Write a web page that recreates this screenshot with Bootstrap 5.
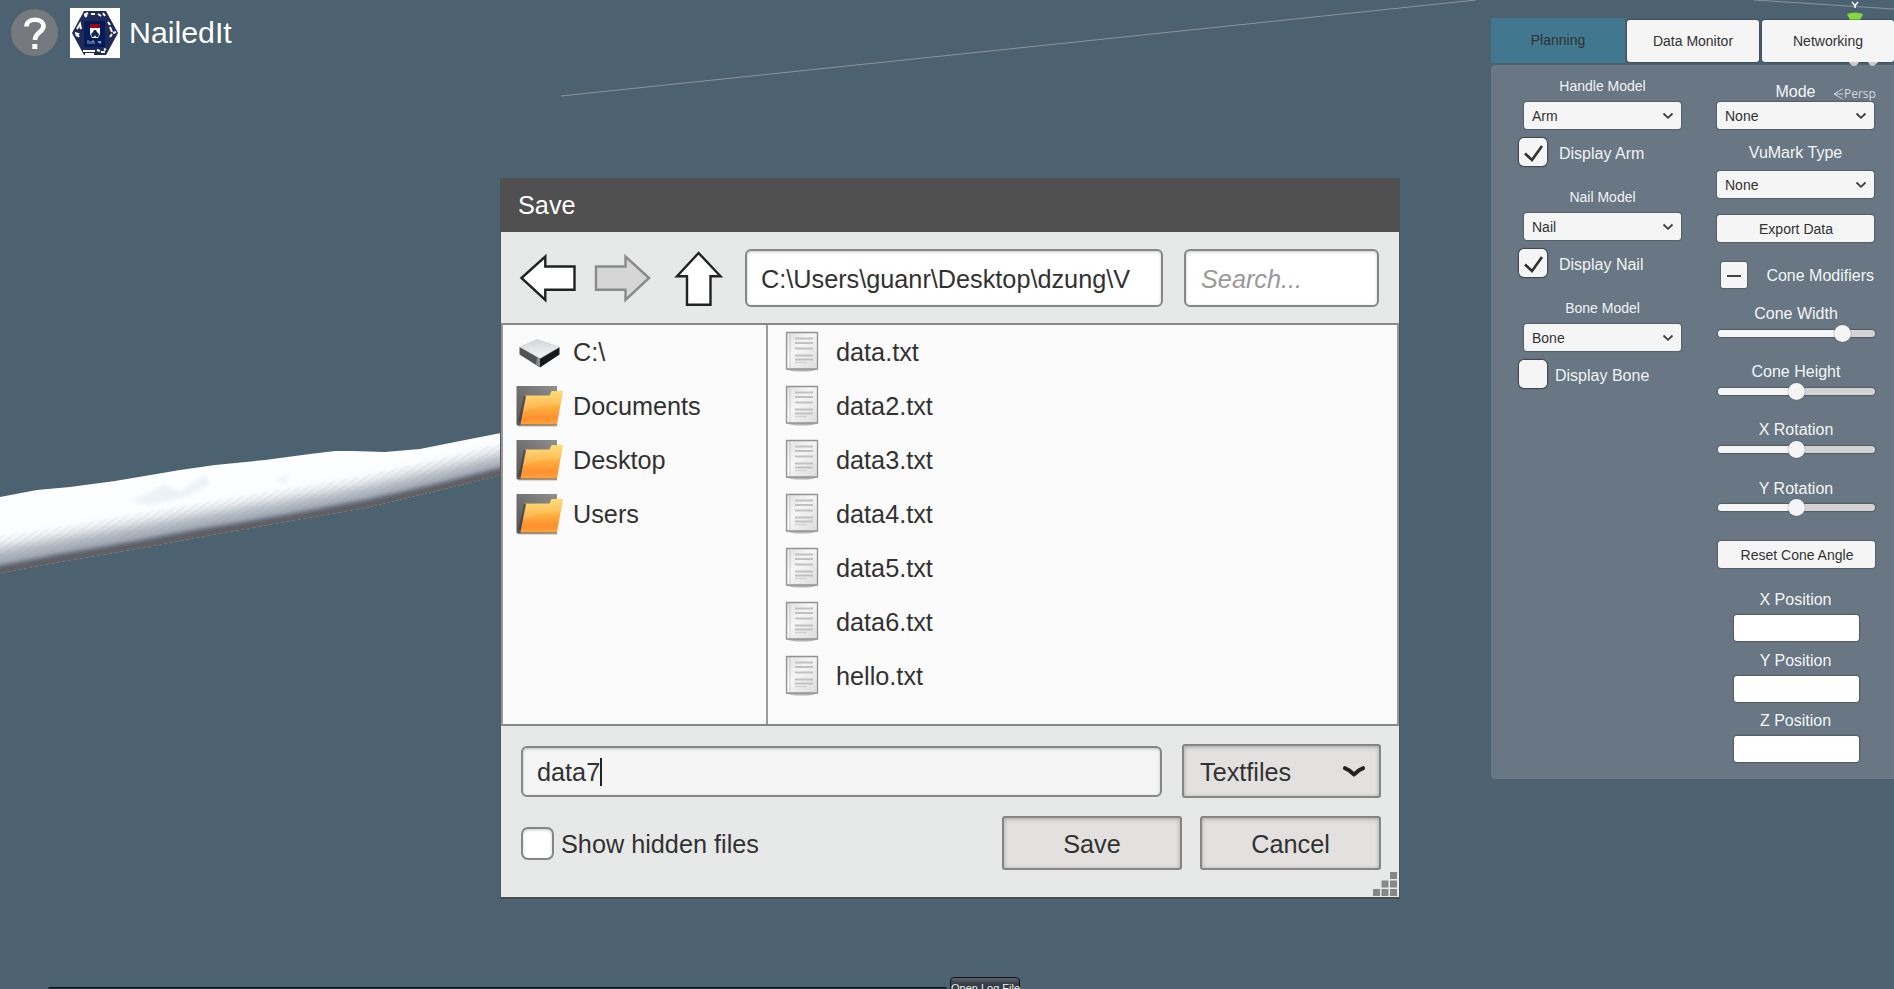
<!DOCTYPE html>
<html lang="en">
<head>
<meta charset="utf-8">
<title>NailedIt</title>
<link href="https://cdn.jsdelivr.net/npm/bootstrap@5.3.0/dist/css/bootstrap.min.css" rel="stylesheet">
<style>
body{width:1894px;height:989px;overflow:hidden;background:#4d6270;font-family:"Liberation Sans",Arial,sans-serif;color:#323232;font-size:14px}
.scene{left:0;top:0;z-index:0}
.over{position:relative;z-index:1}
.brand-row{padding:8px 0 0 11px}
.help-dot{width:47px;height:47px;margin-top:1px;margin-right:12px}
.brand-name{font-size:30.3px;line-height:50px;color:#fff;margin-left:9px}
.side{width:403px;margin-top:18px}
.tab-btn{width:132px;height:42px;line-height:43px;text-align:center;background:#f5f5f5;border-radius:3px;box-shadow:0 0 1px 1px rgba(40,45,50,.3)}
.tab-btn.on{width:134px;height:45px;background:#41778f;border-radius:0;box-shadow:none;margin-right:2px;line-height:45px}
.panel{height:714px;margin-top:2px;background:#687783;border-radius:4px 0 0 4px;padding-left:28px}
.col-a{width:163px;padding-top:11px;margin-right:35px}
.col-b{width:158px;padding-top:15px}
.lbl-s{font-size:14px;line-height:20px;color:#f0f3f5;text-align:center}
.lbl{font-size:16px;line-height:24px;height:22px;color:#f4f6f7;text-align:center;padding-right:1px}
.ctl{width:157px;height:27px;background:#f5f5f5;border-radius:3px;box-shadow:0 0 1px 1px rgba(40,42,45,.3);line-height:28px;font-size:14px;padding:0 7px 0 8px}
.tick{width:28px;height:28px;background:#f5f5f5;border-radius:5px;box-shadow:0 0 1px 1px rgba(25,27,30,.55)}
.group{height:111px}
.group .ctl{margin:6px 0 9px 5px}
.group .lbl-s{padding-left:4px}
.check-txt{font-size:16px;color:#f0f3f5;margin-left:12px;padding-top:3px}
.minus{width:26px;height:26px;background:#f5f5f5;border-radius:2px;box-shadow:0 0 1px 1px rgba(40,42,45,.3)}
.slide{height:58.2px;width:157px;margin-left:1px}
.track{height:7px;margin-top:5.5px;border-radius:4px;background:#d3d3d3;box-shadow:0 0 1px 1px rgba(40,42,45,.35);position:relative}
.fill{height:7px;border-radius:4px 0 0 4px;background:#f5f5f5}
.knob{position:absolute;top:-5px;width:17px;height:17px;margin-left:-8.5px;border-radius:50%;background:#f5f5f5;box-shadow:0 0 1px rgba(40,42,45,.8)}
.pos{height:60.6px}
.pos .box{width:125px;height:26px;margin:5px auto 0;background:#fff;border-radius:3px;box-shadow:0 0 1px 1px rgba(40,42,45,.35)}
.dlg{position:absolute;z-index:2;left:500px;top:178px;width:900px;height:721px;background:#e7e9e8;font-size:25.25px}
.dlg-title{height:54px;line-height:55px;background:#505050;color:#fff;padding-left:18px}
.dlg-body{height:667px;border:1px solid #555;border-top:0;border-bottom:2px solid #4c4c4c}
.bar{height:91px;padding:0 19px 0 18px}
.bar svg{flex:none}
.field{background:#fff;border:2px solid #878787;border-radius:6px;box-shadow:inset 0 1px 3px rgba(0,0,0,.22);white-space:pre;overflow:hidden}
.path-f{width:418px;height:58px;line-height:57px;padding-left:14px}
.find-f{width:195px;height:58px;line-height:57px;padding-left:15px;color:#999;font-style:italic;margin-left:21px}
.lists{height:403px;border:2px solid #989898;border-top-color:#888;border-bottom-color:#888;background:#fbfbfb}
.places{width:265px;border-right:2px solid #9b9b9b}
.item{height:54px;line-height:54px}
.places svg{margin-left:12px;margin-right:10px;flex:none}
.files svg{margin-left:17px;margin-right:17px;flex:none}
.foot{padding:18px 18px 0 20px}
.name-f{width:641px;height:51px;line-height:49px;padding-left:14px;background:#f5f5f5;margin-top:2px}
.caret{display:inline-block;width:2px;height:28px;background:#222;vertical-align:-5px}
.b-btn{height:54px;line-height:52px;border:2px solid #858585;border-radius:3px;background:#e2e1df;box-shadow:inset 0 1px 4px rgba(0,0,0,.28);text-align:center}
.hid{width:33px;height:33px;border-radius:7px}
.grip{position:absolute;right:3px;bottom:3px}
.persp{position:absolute;z-index:2;left:1833px;top:85px;font:12px/17px "Open Sans",sans-serif;color:#d3d9dd}
.log-line{position:absolute;z-index:1;left:48px;top:987px;width:899px;height:4px;background:#26333c;border-top:1px solid #0b1217;border-radius:3px}
.log-btn{position:absolute;z-index:1;left:950px;top:977px;width:70px;height:22px;border:1px solid #10171c;border-radius:4px;background:linear-gradient(#5d646a,#353f46 6px,#2b363e);color:#f0f0f0;font-size:11px;line-height:20px;text-align:center;white-space:nowrap}
</style>
</head>
<body>
<svg class="scene position-absolute" width="1894" height="989" viewBox="0 0 1894 989">
  <defs>
    <clipPath id="boneClip"><path d="M0 497L37 490 70 487 115 481 180 470 215 465 265 460 310 454 335 451H352L385 452 420 449 460 441 501 433V475L440 490 365 508 290 521 200 537 130 550 60 562 0 573Z"/></clipPath>
    <filter id="soft" x="-10%" y="-60%" width="120%" height="220%"><feGaussianBlur stdDeviation="7"/></filter>
    <filter id="soft2" x="-10%" y="-60%" width="120%" height="220%"><feGaussianBlur stdDeviation="2.2"/></filter>
    <pattern id="grain" width="9" height="5" patternUnits="userSpaceOnUse" patternTransform="rotate(-35)"><path d="M0 1H9" stroke="#76808c" stroke-opacity=".13" stroke-width="1.200"/></pattern>
  </defs>
  <path d="M561 96L1476 0M1754 0L1894 9" stroke="#8b959c" stroke-width="1" fill="none"/>
  <g clip-path="url(#boneClip)">
    <rect y="420" width="510" height="160" fill="#fdfeff"/>
    <path d="M-20 566L60 552 130 540 200 528 290 513 365 500 440 483 520 464" stroke="#a3abb6" stroke-width="27" fill="none" filter="url(#soft)"/>
    <path d="M-20 553L60 541 130 529 200 517 290 502 365 490 440 473 520 453" stroke="url(#grain)" stroke-width="28" fill="none"/>
    <path d="M-20 575L60 560 130 548 200 535 290 520 365 506 440 489 520 469" stroke="#5b5f6a" stroke-width="12" fill="none" filter="url(#soft2)"/>
    <path d="M-20 577L60 562 130 550 200 537 290 521 365 508 440 490 520 470" stroke="#625f61" stroke-width="6" fill="none"/>
    <path d="M130 502L165 485 180 492 205 475 210 484 185 497 150 505Z M275 480L288 475 286 484Z" fill="#e4edf6" opacity=".7" filter="url(#soft2)"/>
  </g>
  <path d="M1852 2l3 3.500 3-3.500M1855 5v3" stroke="#fff" stroke-width="1.500" fill="none"/>
  <path d="M1847 14q8-3 16 0l-3 6h-10z" fill="#86d93c"/>
</svg>

<div class="over d-flex justify-content-between align-items-start">
  <header class="brand-row d-flex">
    <svg class="help-dot" viewBox="0 0 47 47"><circle cx="23.500" cy="23.500" r="23.500" fill="#76797d"/><path d="M15.500 17.500C15.500 8.500 32.500 8.500 32.500 17.500C32.500 23 24 23 24 31" stroke="#fff" stroke-width="4.600" fill="none"/><path d="M21.300 35h5v5h-5z" fill="#fff"/></svg>
    <svg width="50" height="50" viewBox="0 0 50 50"><path fill="#fff" d="M0 0h50v50H0z"/><path d="M2 25L14 3H36L48 25 36 47H14Z" fill="#1f2a57"/><path fill="#001d5b" d="M14 13h21v26H14z"/><path fill="#9d0713" d="M20 16h10v4H20z"/><path fill="#fff" d="M20 20h10v6l-2 4h-6l-2-4z"/><path fill="#102861" d="M21 26l2-2 1-2h2l1 2 2 2-1 3h-2l-1-2-1 2h-2z"/><path d="M18 32v4M20 33v3M22 36v-3h2v3M28 33l1 2 1-2M30 36l1-3" stroke="#bcc7dc" stroke-width=".8" fill="none"/><path d="M14 7l4-2M15 9l2-2M21 6h4M28 6l3 2M33 5l2 3M7 21l3-5 1 5M5 25l3 1-2 2M9 29l-2-3M40 19l2 5M43 25l3-1M40 29l2-3M38 14l2 3M13 43h12M15 46h9M27 42l3 1M31 44h4M34 41l2 1" stroke="#fff" stroke-width="2" fill="none"/></svg>
    <div class="brand-name">NailedIt</div>
  </header>

  <aside class="side">
    <div class="d-flex align-items-center">
      <div class="tab-btn on">Planning</div>
      <div class="tab-btn" style="margin-right:3px">Data Monitor</div>
      <div class="tab-btn">Networking</div>
    </div>
    <div class="panel d-flex">
      <div class="col-a">
        <div class="group">
          <div class="lbl-s">Handle Model</div>
          <div class="ctl d-flex justify-content-between align-items-center"><span>Arm</span><svg width="12" height="8" viewBox="0 0 12 8"><path d="M1.500 1.500L6 5.800l4.500-4.300" fill="none" stroke="#3c3c3c" stroke-width="1.800"/></svg></div>
          <div class="d-flex align-items-center"><div class="tick"><svg class="d-block" width="28" height="28" viewBox="0 0 28 28"><path d="M6 15.500l7 6.500L23 8" fill="none" stroke="#323232" stroke-width="2.600"/></svg></div><span class="check-txt">Display Arm</span></div>
        </div>
        <div class="group">
          <div class="lbl-s">Nail Model</div>
          <div class="ctl d-flex justify-content-between align-items-center"><span>Nail</span><svg width="12" height="8" viewBox="0 0 12 8"><path d="M1.500 1.500L6 5.800l4.500-4.300" fill="none" stroke="#3c3c3c" stroke-width="1.800"/></svg></div>
          <div class="d-flex align-items-center"><div class="tick"><svg class="d-block" width="28" height="28" viewBox="0 0 28 28"><path d="M6 15.500l7 6.500L23 8" fill="none" stroke="#323232" stroke-width="2.600"/></svg></div><span class="check-txt">Display Nail</span></div>
        </div>
        <div class="group">
          <div class="lbl-s">Bone Model</div>
          <div class="ctl d-flex justify-content-between align-items-center"><span>Bone</span><svg width="12" height="8" viewBox="0 0 12 8"><path d="M1.500 1.500L6 5.800l4.500-4.300" fill="none" stroke="#3c3c3c" stroke-width="1.800"/></svg></div>
          <div class="d-flex align-items-center"><div class="tick"></div><span class="check-txt" style="margin-left:8px">Display Bone</span></div>
        </div>
      </div>
      <div class="col-b">
        <div class="lbl">Mode</div>
        <div class="ctl d-flex justify-content-between align-items-center"><span>None</span><svg width="12" height="8" viewBox="0 0 12 8"><path d="M1.500 1.500L6 5.800l4.500-4.300" fill="none" stroke="#3c3c3c" stroke-width="1.800"/></svg></div>
        <div class="lbl" style="margin:12px 0 8px">VuMark Type</div>
        <div class="ctl d-flex justify-content-between align-items-center"><span>None</span><svg width="12" height="8" viewBox="0 0 12 8"><path d="M1.500 1.500L6 5.800l4.500-4.300" fill="none" stroke="#3c3c3c" stroke-width="1.800"/></svg></div>
        <div class="ctl text-center" style="margin:17px 0 20px">Export Data</div>
        <div class="d-flex align-items-center justify-content-between" style="padding-left:4px;margin-bottom:14px">
          <div class="minus"><svg class="d-block" width="26" height="26" viewBox="0 0 26 26"><path d="M6 14h14" stroke="#323232" stroke-width="1.800"/></svg></div>
          <div class="lbl text-nowrap">Cone Modifiers</div>
        </div>
        <div class="slide"><div class="lbl">Cone Width</div><div class="track"><div class="fill" style="width:79%"></div><div class="knob" style="left:79%"></div></div></div>
        <div class="slide"><div class="lbl">Cone Height</div><div class="track"><div class="fill" style="width:50%"></div><div class="knob" style="left:50%"></div></div></div>
        <div class="slide"><div class="lbl">X Rotation</div><div class="track"><div class="fill" style="width:50%"></div><div class="knob" style="left:50%"></div></div></div>
        <div class="slide"><div class="lbl">Y Rotation</div><div class="track"><div class="fill" style="width:50%"></div><div class="knob" style="left:50%"></div></div></div>
        <div class="ctl text-center" style="margin:6px 0 20.5px 1px">Reset Cone Angle</div>
        <div class="pos"><div class="lbl">X Position</div><div class="box"></div></div>
        <div class="pos"><div class="lbl">Y Position</div><div class="box"></div></div>
        <div class="pos"><div class="lbl">Z Position</div><div class="box"></div></div>
      </div>
    </div>
  </aside>
</div>

<svg class="position-absolute" style="left:1847px;top:62px;z-index:2" width="32" height="5" viewBox="0 0 32 5"><path d="M2 0h10q-2 4-5 4t-5-4zM21 0h10q-3 4-6 4-3-1-4-4z" fill="#c9cacb"/></svg>
<div class="persp d-flex align-items-center"><svg width="10" height="12" viewBox="0 0 10 12"><path d="M9.500 1L1 6l8.500 5M1 6h9" stroke="#d3d9dd" fill="none"/></svg><span style="margin-left:1px">Persp</span></div>

<section class="dlg">
  <div class="dlg-title">Save</div>
  <div class="dlg-body">
    <div class="bar d-flex align-items-center">
      <svg width="226" height="60" viewBox="519 247 226 60"><g stroke-width="2.400" stroke-linejoin="miter"><path d="M521.500 277L545.300 255.500V265.500H574.500V288.700H545.300V299Z" fill="#fff" stroke="#222"/><path d="M649 277L625.500 255.500V265.500H596V288.700H625.500V299Z" fill="#d6d6d6" stroke="#8b8b8b"/><path d="M698.600 252L720.500 275.300H710.500V303.800H687V275.300H677Z" fill="#fff" stroke="#222"/></g></svg>
      <div class="field path-f">C:\Users\guanr\Desktop\dzung\V</div>
      <div class="field find-f">Search...</div>
    </div>
    <div class="lists d-flex">
      <div class="places">
        <div class="item d-flex align-items-center"><svg width="48" height="44" viewBox="0 0 48 44"><use href="#drive"/></svg>C:\</div>
        <div class="item d-flex align-items-center"><svg width="48" height="44" viewBox="0 0 48 44"><use href="#folder"/></svg>Documents</div>
        <div class="item d-flex align-items-center"><svg width="48" height="44" viewBox="0 0 48 44"><use href="#folder"/></svg>Desktop</div>
        <div class="item d-flex align-items-center"><svg width="48" height="44" viewBox="0 0 48 44"><use href="#folder"/></svg>Users</div>
      </div>
      <div class="files">
        <div class="item d-flex align-items-center"><svg width="34" height="42"><use href="#doc"/></svg>data.txt</div>
        <div class="item d-flex align-items-center"><svg width="34" height="42"><use href="#doc"/></svg>data2.txt</div>
        <div class="item d-flex align-items-center"><svg width="34" height="42"><use href="#doc"/></svg>data3.txt</div>
        <div class="item d-flex align-items-center"><svg width="34" height="42"><use href="#doc"/></svg>data4.txt</div>
        <div class="item d-flex align-items-center"><svg width="34" height="42"><use href="#doc"/></svg>data5.txt</div>
        <div class="item d-flex align-items-center"><svg width="34" height="42"><use href="#doc"/></svg>data6.txt</div>
        <div class="item d-flex align-items-center"><svg width="34" height="42"><use href="#doc"/></svg>hello.txt</div>
      </div>
    </div>
    <div class="foot">
      <div class="d-flex justify-content-between align-items-start">
        <div class="field name-f">data7<span class="caret"></span></div>
        <div class="b-btn d-flex justify-content-between align-items-center" style="width:199px;padding:1px 14px 0 16px"><span>Textfiles</span><svg width="22" height="12" viewBox="0 0 22 12"><path d="M2 2.200L6 4.200 11 8.500 16 4.200 20 2.200" fill="none" stroke="#222" stroke-width="4" stroke-linecap="round" stroke-linejoin="round"/></svg></div>
      </div>
      <div class="d-flex align-items-center" style="margin-top:18px">
        <div class="field hid"></div><span style="margin-left:7px;padding-top:3px">Show hidden files</span>
        <div class="b-btn ms-auto" style="width:180px;margin-right:18px">Save</div>
        <div class="b-btn" style="width:181px">Cancel</div>
      </div>
    </div>
  </div>
  <svg class="grip" width="24" height="24" viewBox="0 0 24 24"><path fill="#878787" d="M17 0h7v7h-7zM8.500 8.500h7v7h-7zM17 8.500h7v7h-7zM0 17h7v7H0zM8.500 17h7v7h-7zM17 17h7v7h-7z"/></svg>
</section>

<svg width="0" height="0" class="position-absolute">
  <defs>
    <linearGradient id="gO" x1="0" y1="0" x2="0" y2="1"><stop offset="0" stop-color="#ffd763"/><stop offset=".45" stop-color="#ffb340"/><stop offset=".8" stop-color="#ff9030"/><stop offset="1" stop-color="#ffa238"/></linearGradient>
    <linearGradient id="gG" x1="0" y1="1" x2="1" y2="0"><stop offset="0" stop-color="#555"/><stop offset="1" stop-color="#909090"/></linearGradient>
    <linearGradient id="gD" x1="0" y1="0" x2="1" y2="1"><stop offset="0" stop-color="#ddd"/><stop offset=".4" stop-color="#f6f6f6"/><stop offset="1" stop-color="#dcdcdc"/></linearGradient>
    <linearGradient id="gT" x1="0" y1="0" x2="0" y2="1"><stop offset="0" stop-color="#d5d6d9"/><stop offset="1" stop-color="#f4f4f6"/></linearGradient>
    <symbol id="folder"><path d="M1.500 2H42v39.500H3q-1.500 0-1.500-1.500z" fill="url(#gG)"/><path d="M10.500 11.500h24l2-4.500H48L42 40.500H5.500z" fill="url(#gO)"/><path d="M10.500 12h24l2-4.500h11l-2.500 13q-22 0-37 7z" fill="#fff" opacity=".13"/><path d="M10 12L4.500 38" stroke="#3a3a3a" stroke-width="2.500" opacity=".6"/><path d="M3 41.800H42" stroke="#8a8a86"/></symbol>
    <symbol id="drive"><path d="M4.500 17L25 27v10.500L4.500 24.500z" fill="#505255"/><path d="M44.500 17L25 27v10.500l19.500-13z" fill="#17181a"/><path d="M5 17L22 9.500 44.500 17 25 28.500z" fill="url(#gT)" stroke="#c6c8ca" stroke-width=".6"/><path d="M22 27l3 1.500v8.500l-4-2z" fill="#8a8c90"/></symbol>
    <symbol id="doc"><ellipse cx="17" cy="38.500" rx="14" ry="2" fill="#999" opacity=".7"/><path d="M1.500 1.500h31v36.500h-31z" fill="url(#gD)" stroke="#929292" stroke-width="1.300"/><path d="M5 2v35" stroke="#cbcbcb" stroke-width=".8"/><path d="M10 7.500h18M10 12h18M10 17.500h18M10 24.500h18M10 28.500h18" stroke="#c1c1c1" stroke-width="2"/><path d="M10 31.500h12" stroke="#d2d2d2" stroke-width="1.300"/></symbol>
  </defs>
</svg>
<div class="log-line"></div>
<div class="log-btn">Open Log File</div>
<script src="https://cdn.jsdelivr.net/npm/bootstrap@5.3.0/dist/js/bootstrap.bundle.min.js"></script>
</body>
</html>
